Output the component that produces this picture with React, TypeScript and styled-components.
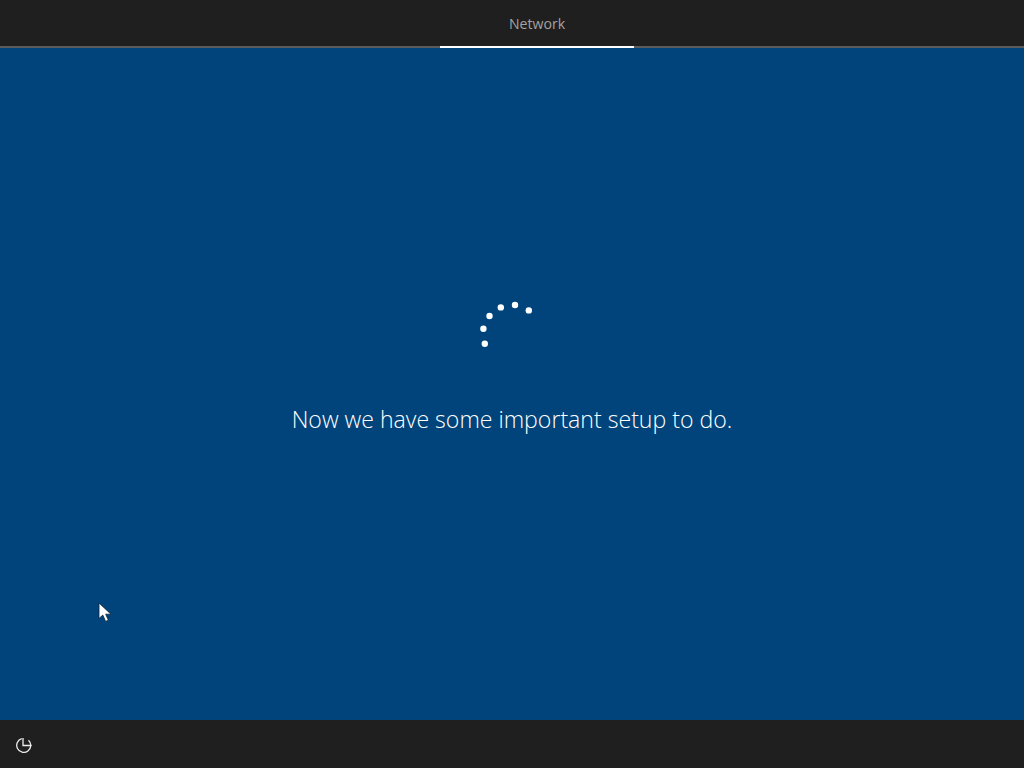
import React from "react";
import styled, { createGlobalStyle } from "styled-components";

const Global = createGlobalStyle`
  html, body { margin: 0; padding: 0; background: #00447b; }
  #root { width: 1024px; height: 768px; }
`;
const Screen = styled.div`
  position: relative;
  width: 1024px;
  height: 768px;
  display: flex;
  flex-direction: column;
  overflow: hidden;
  background: #00447b;
  font-family: "Open Sans", "Noto Sans", sans-serif;
`;
const TopBar = styled.header`
  height: 48px;
  box-sizing: border-box;
  padding-left: 440px;
  background: #1f1f1f;
  border-bottom: 2px solid #5c5c5c;
  display: flex;
`;
const Tab = styled.div`
  width: 194px;
  height: 48px;
  box-sizing: border-box;
  padding-top: 1px;
  border-bottom: 2px solid #ffffff;
  color: #a3a3a3;
  font-size: 14.1px;
  line-height: 46px;
  text-align: center;
`;
const Main = styled.main`
  flex: 1;
  display: flex;
  flex-direction: column;
  align-items: center;
  padding-top: 252px;
`;
const Spinner = styled.svg`
  display: block;
  width: 64px;
  height: 50px;
`;
const Message = styled.p`
  margin: 53px 0 0;
  color: #ffffff;
  font-size: 23.1px;
  font-weight: 300;
  line-height: 32px;
  white-space: nowrap;
`;
const BottomBar = styled.footer`
  height: 48px;
  background: #1f1f1f;
  display: flex;
  align-items: center;
  padding-left: 15px;
`;
const PowerIcon = styled.svg`
  display: block;
  width: 18px;
  height: 18px;
`;
const Cursor = styled.svg`
  position: absolute;
  left: 98px;
  top: 602px;
  width: 14px;
  height: 21px;
`;

const dots: [number, number][] = [
  [4.8, 43.8],
  [3.4, 28.8],
  [9.5, 16],
  [20.8, 7.4],
  [35, 5],
  [48.8, 10.4],
];

export default function App() {
  return (
    <Screen>
      <Global />
      <TopBar>
        <Tab>Network</Tab>
      </TopBar>
      <Main>
        <Spinner viewBox="0 0 64 50">
          {dots.map(([cx, cy]) => (
            <circle key={cx} cx={cx} cy={cy} r="3.2" fill="#ffffff" />
          ))}
        </Spinner>
        <Message>Now we have some important setup to do.</Message>
      </Main>
      <BottomBar>
        <PowerIcon viewBox="0 0 18 18" fill="none" stroke="#ececec" strokeWidth="1.3">
          <path d="M13.5 5.2A7 7 0 1 1 6.8 3.6" />
          <path d="M8 3v7.5h8.6" />
        </PowerIcon>
      </BottomBar>
      <Cursor viewBox="0 0 14 21">
        <path d="M1 1v15.5l3.8-3.4 2.8 6.3 2.8-1.2-2.7-6h5.3z" fill="#ffffff" stroke="#0a2238" strokeWidth="0.8" />
      </Cursor>
    </Screen>
  );
}
